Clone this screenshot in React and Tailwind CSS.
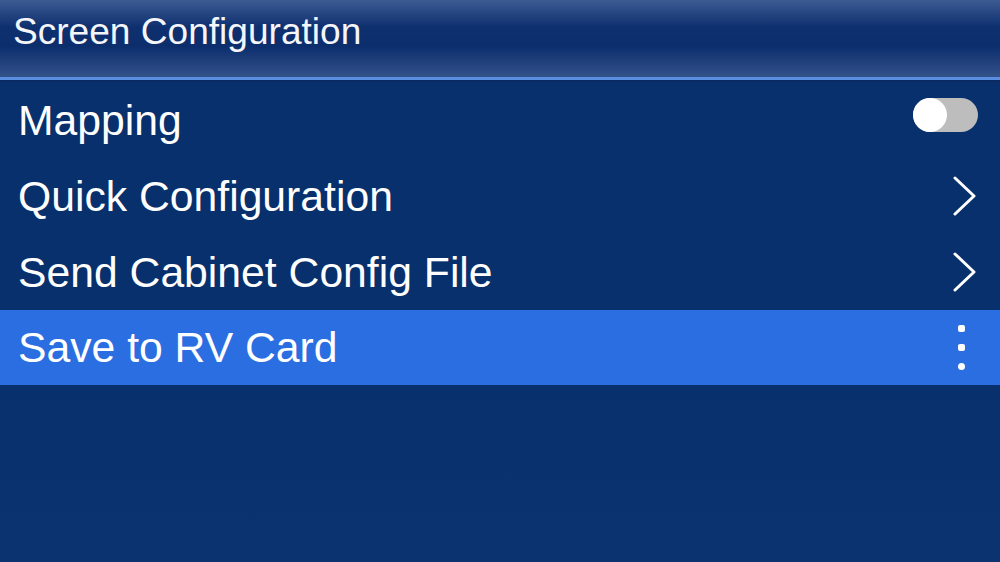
export default function App() {
  const font = { fontFamily: '"Liberation Sans", Arial, sans-serif' };
  const Chevron = () => (
    <svg width="26" height="40" viewBox="0 0 26 40" fill="none">
      <path d="M3 2 L22 20 L3 38" stroke="white" strokeWidth="3" strokeLinecap="round" strokeLinejoin="round" />
    </svg>
  );
  return (
    <div className="w-[1000px] h-[562px] flex flex-col bg-[#08306c] text-white overflow-hidden" style={font}>
      <div className="h-[77px] shrink-0 flex items-center pl-[13px] pb-[14px] bg-[linear-gradient(to_bottom,#3c5b93_0%,#0f306f_35%,#0c2e6d_60%,#34528a_100%)]">
        <span className="text-[37.1px] leading-none text-[#f4f6fa]">Screen Configuration</span>
      </div>
      <div className="h-[3px] shrink-0 bg-[#5b8ee0]" />
      <div className="h-[2px] shrink-0 bg-[#0a2a63]" />
      <div className="flex flex-col">
        <div className="h-[76px] flex items-center justify-between pl-[18px] pr-[22px]">
          <span className="text-[42.7px] leading-none">Mapping</span>
          <div className="w-[65px] h-[34px] mb-[10px] rounded-full bg-[#bdbdbd] flex items-center">
            <div className="w-[34px] h-[34px] rounded-full bg-white" />
          </div>
        </div>
        <div className="h-[76px] flex items-center justify-between pl-[18px] pr-[22px]">
          <span className="text-[42.7px] leading-none">Quick Configuration</span>
          <Chevron />
        </div>
        <div className="h-[76px] flex items-center justify-between pl-[18px] pr-[22px]">
          <span className="text-[42.7px] leading-none">Send Cabinet Config File</span>
          <Chevron />
        </div>
        <div className="h-[75px] flex items-center justify-between pl-[18px] pr-[35px] bg-[#2a6ee2]">
          <span className="text-[42.7px] leading-none">Save to RV Card</span>
          <div className="flex flex-col gap-[12px]">
            <div className="w-[7px] h-[7px] rounded-[2px] bg-white" />
            <div className="w-[7px] h-[7px] rounded-[2px] bg-white" />
            <div className="w-[7px] h-[7px] rounded-full bg-white" />
          </div>
        </div>
      </div>
      <div className="flex-1 bg-[linear-gradient(to_bottom,#08306c,#0a336f)]" />
    </div>
  );
}
